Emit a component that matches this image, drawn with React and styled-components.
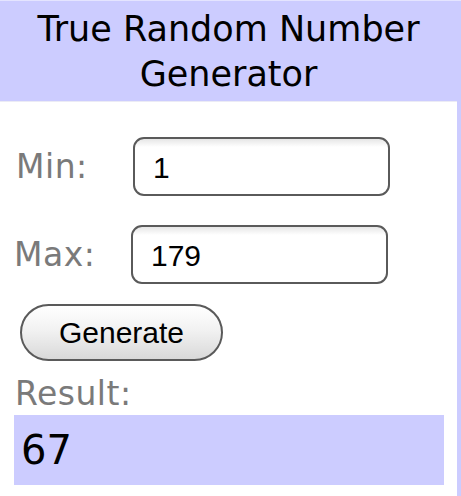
import React, { useState } from 'react';
import styled, { createGlobalStyle } from 'styled-components';

const GlobalStyle = createGlobalStyle`
  html, body {
    margin: 0;
    padding: 0;
    background: #ccccff;
  }
  #root {
    height: 496px;
    overflow: hidden;
  }
`;

const App = () => {
  const [min, setMin] = useState('1');
  const [max, setMax] = useState('179');
  const [result, setResult] = useState(67);

  const handleGenerate = () => {
    const lo = parseInt(min, 10);
    const hi = parseInt(max, 10);
    if (isNaN(lo) || isNaN(hi) || hi < lo) return;
    setResult(lo + Math.floor(Math.random() * (hi - lo + 1)));
  };

  return (
    <Page>
      <GlobalStyle />
      <Header>
        True Random Number
        <br />
        Generator
      </Header>
      <Panel>
        <FieldRow>
          <Label>Min:</Label>
          <Input value={min} onChange={e => setMin(e.target.value)} />
        </FieldRow>
        <FieldRow shift={-2}>
          <Label>Max:</Label>
          <Input value={max} onChange={e => setMax(e.target.value)} />
        </FieldRow>
        <GenerateBtn onClick={handleGenerate}>Generate</GenerateBtn>
        <ResultLabel>Result:</ResultLabel>
        <ResultBox>{result}</ResultBox>
      </Panel>
    </Page>
  );
};

export default App;

const Page = styled.div`
  display: flex;
  flex-direction: column;
  height: 496px;
  background: #ccccff;
  border-top: 1px solid #e4e4ff;
  box-sizing: border-box;
`;

const Header = styled.div`
  height: 100px;
  box-sizing: border-box;
  padding-top: 6px;
  padding-right: 4px;
  text-align: center;
  font-family: 'DejaVu Sans', sans-serif;
  font-size: 35px;
  line-height: 45px;
  color: #000;
`;

const Panel = styled.div`
  flex: 1;
  margin-right: 4px;
  background: #fff;
  border-top: 1px solid #ebebf5;
  display: flex;
  flex-direction: column;
  padding: 35px 0 0 14px;
`;

const FieldRow = styled.div`
  display: flex;
  align-items: center;
  height: 59px;
  margin-bottom: 29px;
  margin-left: ${props => props.shift || 0}px;
`;

const Label = styled.span`
  width: 117px;
  padding-left: 2px;
  font-family: 'DejaVu Sans', sans-serif;
  font-size: 33px;
  color: #7a7a7a;
  letter-spacing: 0.5px;
`;

const Input = styled.input`
  width: 257px;
  height: 59px;
  box-sizing: border-box;
  border: 2px solid #5a5a5a;
  border-radius: 11px;
  padding: 2px 0 0 18px;
  font-family: 'Liberation Sans', Arial, sans-serif;
  font-size: 30px;
  color: #000;
  background: linear-gradient(#e6e6e6 0px, #fff 8px, #fff 100%);
  outline: none;
`;

const GenerateBtn = styled.button`
  width: 203px;
  height: 57px;
  margin: -9px 0 0 6px;
  border: 2px solid #5a5a5a;
  border-radius: 29px;
  background: linear-gradient(#ffffff 0%, #f2f2f2 45%, #d9d9d9 100%);
  font-family: 'Liberation Sans', Arial, sans-serif;
  font-size: 30px;
  color: #000;
  padding: 0;
  cursor: pointer;
`;

const ResultLabel = styled.div`
  margin: 14px 0 0 1px;
  font-family: 'DejaVu Sans', sans-serif;
  font-size: 33px;
  line-height: 38px;
  color: #7a7a7a;
  letter-spacing: 0.5px;
`;

const ResultBox = styled.div`
  width: 430px;
  height: 70px;
  margin-top: 2px;
  box-sizing: border-box;
  padding: 9px 0 0 7px;
  background: #ccccff;
  font-family: 'DejaVu Sans', sans-serif;
  font-size: 40px;
  line-height: 52px;
  color: #000;
`;
